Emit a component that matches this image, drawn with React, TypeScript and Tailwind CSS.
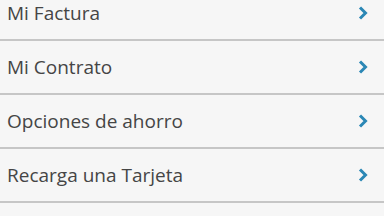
import React from "react";

const items = ["Mi Factura", "Mi Contrato", "Opciones de ahorro", "Recarga una Tarjeta"];

function Chevron() {
  return (
    <svg width="10" height="14" viewBox="0 0 10 14" className="shrink-0">
      <path d="M2 1.5 L7.5 7 L2 12.5" fill="none" stroke="#2b87b5" strokeWidth="3" strokeLinejoin="miter" strokeLinecap="butt" />
    </svg>
  );
}

export default function App() {
  return (
    <div className="w-[384px] h-[216px] overflow-hidden bg-[#f6f6f6]" style={{ fontFamily: '"Open Sans", sans-serif' }}>
      <div className="mt-[-13px] flex flex-col">
        {items.map((t) => (
          <div key={t} className="h-[54px] flex items-center justify-between pl-[7px] pr-[16px] border-b-2 border-[#c6c6c6] bg-[#f6f6f6]">
            <span className="text-[19px] leading-none text-[#454545] pt-[1px]">{t}</span>
            <Chevron />
          </div>
        ))}
        <div className="h-[54px] bg-[#f6f6f6]" />
      </div>
    </div>
  );
}
